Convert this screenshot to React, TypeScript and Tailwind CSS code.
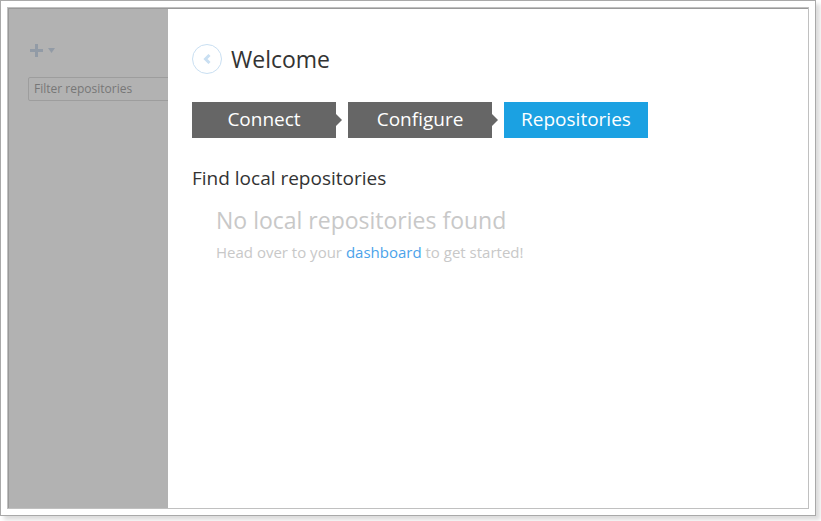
import React from "react";

type Step = { label: string; active?: boolean };

const steps: Step[] = [
  { label: "Connect" },
  { label: "Configure" },
  { label: "Repositories", active: true },
];

function Sidebar() {
  return (
    <aside className="w-40 shrink-0 overflow-hidden border-l border-[#999999] bg-[#b2b2b2] pt-8 pl-[19px]">
      <button type="button" aria-label="Add repository" className="flex h-5 items-center">
        <svg width="28" height="14" viewBox="0 0 28 14" fill="#929ba6" shapeRendering="crispEdges">
          <path d="M7 0h3v5h5v3h-5v5H7V8H2V5h5z" />
          <path d="M20 4h7l-3.5 5z" shapeRendering="auto" />
        </svg>
      </button>
      <input
        type="text"
        aria-label="Filter repositories"
        placeholder="Filter repositories"
        className="mt-4 block h-6 w-52 rounded-xs border border-[#9d9d9d] bg-transparent px-[5px] pb-0.5 text-xs text-[#777777] outline-none placeholder:text-[#777777]"
      />
    </aside>
  );
}

function StepTab({ label, active }: Step) {
  return (
    <li className="flex w-[156px] items-center">
      <button
        type="button"
        aria-current={active ? "step" : undefined}
        className={`h-9 w-36 pb-0.5 text-[19px] leading-8 text-white ${active ? "bg-[#1ba1e2]" : "bg-[#666666]"}`}
      >
        {label}
      </button>
      {!active && (
        <svg width="6" height="12" viewBox="0 0 6 12" fill="#666666">
          <path d="M0 0l6 6-6 6z" />
        </svg>
      )}
    </li>
  );
}

export default function App() {
  return (
    <div className="h-screen pr-[5px] pb-[5px] font-['Open_Sans','Noto_Sans',sans-serif]">
      <div className="h-full border border-[#a9a9a9] bg-white p-1.5 shadow-[4px_4px_4px_#dddddd]">
        <div className="flex h-full flex-col border border-[#c0c0c0]">
          <div className="flex min-h-0 flex-1 border-t border-[#999999]">
            <Sidebar />
            <main className="min-w-0 flex-1 px-6 pt-[35px]">
              <header className="flex h-[30px] items-center gap-[9px]">
                <button
                  type="button"
                  aria-label="Back"
                  className="flex size-[30px] items-center justify-center rounded-full border border-[#c9dff2]"
                >
                  <svg width="8" height="10" viewBox="0 0 8 10" fill="none" stroke="#c9dff2" strokeWidth="3">
                    <path d="M6.5 1L2.5 5l4 4" />
                  </svg>
                </button>
                <h1 className="text-[23px] leading-8 text-[#333333]">Welcome</h1>
              </header>
              <ol className="mt-7 flex">
                {steps.map((step) => (
                  <StepTab key={step.label} {...step} />
                ))}
              </ol>
              <h2 className="mt-7 text-[19px] leading-6 text-[#333333]">Find local repositories</h2>
              <section className="mt-3.5 pl-6 text-[#c8c8c8]">
                <h3 className="text-[23px] leading-8">No local repositories found</h3>
                <p className="mt-1 text-[15px] leading-6">
                  Head over to your{" "}
                  <a href="#dashboard" className="text-[#4ba3ea]">
                    dashboard
                  </a>{" "}
                  to get started!
                </p>
              </section>
            </main>
          </div>
        </div>
      </div>
    </div>
  );
}
